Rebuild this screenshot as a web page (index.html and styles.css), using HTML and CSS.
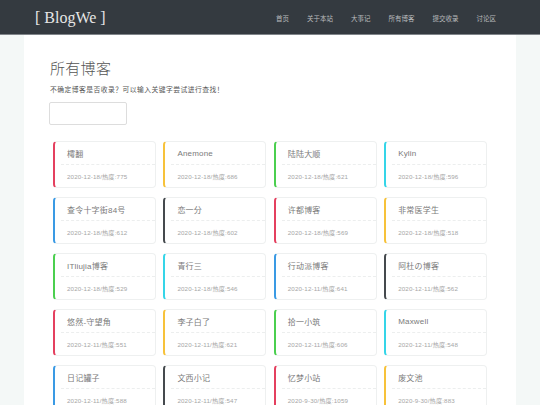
FILE: index.html
```html
<!DOCTYPE html>
<html lang="zh">
<head>
<meta charset="utf-8">
<title>BlogWe</title>
<link rel="stylesheet" href="styles.css">
</head>
<body>
<header class="navbar">
  <div class="nav-inner">
    <a class="brand">[ BlogWe ]</a>
    <nav class="menu">
      <a>首页</a>
      <a>关于本站</a>
      <a>大事记</a>
      <a>所有博客</a>
      <a>提交收录</a>
      <a>讨论区</a>
    </nav>
  </div>
</header>
<main class="container">
  <h1 class="title">所有博客</h1>
  <p class="hint">不确定博客是否收录？可以输入关键字尝试进行查找！</p>
  <input class="search" type="text">
  <div class="grid">
    <div class="card c-red"><div class="card-title">樗翻</div><div class="card-meta">2020-12-18/热度:775</div></div>
    <div class="card c-yellow"><div class="card-title">Anemone</div><div class="card-meta">2020-12-18/热度:686</div></div>
    <div class="card c-green"><div class="card-title">陆陆大顺</div><div class="card-meta">2020-12-18/热度:621</div></div>
    <div class="card c-cyan"><div class="card-title">Kylin</div><div class="card-meta">2020-12-18/热度:596</div></div>

    <div class="card c-blue"><div class="card-title">查令十字街84号</div><div class="card-meta">2020-12-18/热度:612</div></div>
    <div class="card c-dark"><div class="card-title">恋一分</div><div class="card-meta">2020-12-18/热度:602</div></div>
    <div class="card c-red"><div class="card-title">许都博客</div><div class="card-meta">2020-12-18/热度:569</div></div>
    <div class="card c-yellow"><div class="card-title">非常医学生</div><div class="card-meta">2020-12-18/热度:518</div></div>

    <div class="card c-green"><div class="card-title">ITliujia博客</div><div class="card-meta">2020-12-18/热度:529</div></div>
    <div class="card c-cyan"><div class="card-title">青行三</div><div class="card-meta">2020-12-18/热度:546</div></div>
    <div class="card c-blue"><div class="card-title">行动派博客</div><div class="card-meta">2020-12-11/热度:641</div></div>
    <div class="card c-dark"><div class="card-title">阿杜の博客</div><div class="card-meta">2020-12-11/热度:562</div></div>

    <div class="card c-red"><div class="card-title">悠然-守望角</div><div class="card-meta">2020-12-11/热度:551</div></div>
    <div class="card c-yellow"><div class="card-title">李子白了</div><div class="card-meta">2020-12-11/热度:621</div></div>
    <div class="card c-green"><div class="card-title">拾一小筑</div><div class="card-meta">2020-12-11/热度:606</div></div>
    <div class="card c-cyan"><div class="card-title">Maxwell</div><div class="card-meta">2020-12-11/热度:548</div></div>

    <div class="card c-blue"><div class="card-title">日记罐子</div><div class="card-meta">2020-12-11/热度:588</div></div>
    <div class="card c-dark"><div class="card-title">文西小记</div><div class="card-meta">2020-12-11/热度:547</div></div>
    <div class="card c-red"><div class="card-title">忆梦小站</div><div class="card-meta">2020-9-30/热度:1059</div></div>
    <div class="card c-yellow"><div class="card-title">废文池</div><div class="card-meta">2020-9-30/热度:883</div></div>
  </div>
</main>
</body>
</html>
```
FILE: styles.css
```css
* { box-sizing: border-box; }
html, body { margin: 0; padding: 0; }
body {
  background: #f4f8f7;
  font-family: "Liberation Sans", Arial, "Noto Sans CJK SC", sans-serif;
  color: #555;
}
.navbar {
  background: #343a40;
  height: 35px;
  border-bottom: 1px solid #80858a;
}
.nav-inner {
  height: 34px;
  margin: 0 35px;
  display: flex;
  align-items: center;
  justify-content: space-between;
}
.brand {
  font-family: "Liberation Serif", "Times New Roman", serif;
  font-size: 16px;
  color: #e6e6e6;
  margin-top: 1px;
}
.menu {
  display: flex;
  margin-top: 1px;
}
.menu a {
  font-size: 6.5px;
  color: #b9bbbd;
  padding: 0 9px;
  font-family: "Noto Sans CJK SC", sans-serif;
}
.container {
  width: 492px;
  margin: 0 auto;
  background: #fff;
  padding: 22px 26px 20px;
  min-height: 400px;
}
.title {
  font-family: "Noto Sans CJK SC", sans-serif;
  font-weight: 300;
  font-size: 15px;
  color: #555;
  margin: 0;
  line-height: 22px;
  letter-spacing: 0.3px;
}
.hint {
  font-family: "Noto Sans CJK SC", sans-serif;
  font-size: 6.8px;
  letter-spacing: 0.45px;
  color: #555;
  margin: 5px 0 0;
  line-height: 10px;
}
.search {
  display: block;
  width: 78px;
  height: 23px;
  border: 1px solid #ddd;
  border-radius: 2px;
  margin: 8px 0 0 -1px;
  background: #fff;
}
.grid {
  margin: 16px 3px 0;
  display: grid;
  grid-template-columns: repeat(4, 1fr);
  column-gap: 7.5px;
  row-gap: 9px;
}
.card {
  height: 47px;
  border: 1px solid #eef0f0;
  border-left: 2px solid #ccc;
  border-radius: 4px;
  padding-left: 6px;
  display: flex;
  flex-direction: column;
}
.card-title {
  height: 23px;
  border-bottom: 1px dashed #eceeee;
  padding-left: 6px;
  display: flex;
  align-items: center;
  font-size: 8px;
  letter-spacing: 0.2px;
  color: #7a7a7a;
  font-family: "Liberation Sans", Arial, "Noto Sans CJK SC", sans-serif;
}
.card-meta {
  flex: 1;
  padding-left: 6px;
  display: flex;
  align-items: center;
  font-size: 6.2px;
  letter-spacing: 0.15px;
  color: #a6a6a6;
  font-family: "Liberation Sans", Arial, "Noto Sans CJK SC", sans-serif;
}
.c-red { border-left-color: #e4405f; }
.c-yellow { border-left-color: #f7c23a; }
.c-green { border-left-color: #4bcf4f; }
.c-cyan { border-left-color: #35d5e8; }
.c-blue { border-left-color: #3a9ae4; }
.c-dark { border-left-color: #454a4e; }
```
